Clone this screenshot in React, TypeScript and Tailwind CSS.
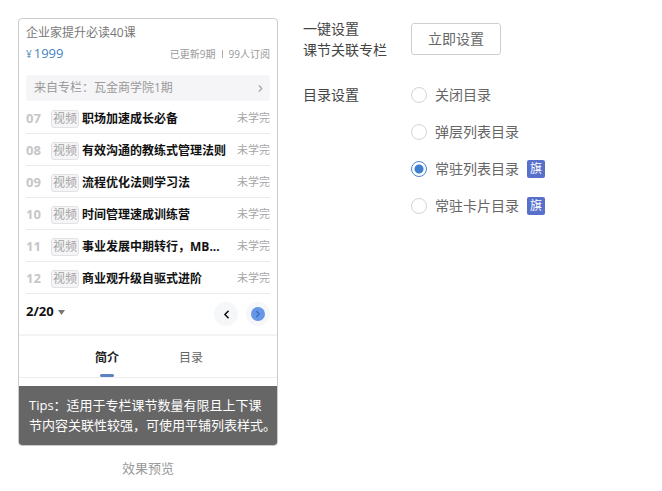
import { useState } from "react";
import { ChevronLeft, ChevronRight } from "lucide-react";

interface Lesson {
  no: string;
  title: string;
}

interface CatalogOption {
  value: string;
  label: string;
  flagship?: boolean;
}

const LESSONS: Lesson[] = [
  { no: "07", title: "职场加速成长必备" },
  { no: "08", title: "有效沟通的教练式管理法则" },
  { no: "09", title: "流程优化法则学习法" },
  { no: "10", title: "时间管理速成训练营" },
  { no: "11", title: "事业发展中期转行，MB..." },
  { no: "12", title: "商业观升级自驱式进阶" },
];

const CATALOG_OPTIONS: CatalogOption[] = [
  { value: "off", label: "关闭目录" },
  { value: "popup", label: "弹层列表目录" },
  { value: "list", label: "常驻列表目录", flagship: true },
  { value: "card", label: "常驻卡片目录", flagship: true },
];

export default function App() {
  const [catalog, setCatalog] = useState("list");

  return (
    <main className="flex items-start gap-[25px] bg-white p-[18px] font-['Open_Sans','Noto_Sans_CJK_SC',sans-serif] text-[#444]">
      <figure className="w-1/2 max-w-[260px]">
        <PreviewCard />
        <figcaption className="mt-3 text-center text-[13px] leading-[20px] text-[#999]">效果预览</figcaption>
      </figure>

      <div className="flex-1 text-sm leading-[21px]">
        <div className="flex items-start">
          <div className="w-[108px] shrink-0">
            <p>一键设置</p>
            <p>课节关联专栏</p>
          </div>
          <button
            type="button"
            className="mt-[5px] rounded-[3px] border border-[#cfcfcf] bg-white px-4 py-[5px] leading-[20px] text-[#666]"
          >
            立即设置
          </button>
        </div>

        <fieldset className="mt-6 flex items-start">
          <legend className="float-left w-[108px] shrink-0">目录设置</legend>
          <div className="flex flex-col gap-4">
            {CATALOG_OPTIONS.map((option) => (
              <CatalogRadio
                key={option.value}
                option={option}
                checked={catalog === option.value}
                onSelect={() => setCatalog(option.value)}
              />
            ))}
          </div>
        </fieldset>
      </div>
    </main>
  );
}

function PreviewCard() {
  return (
    <section className="overflow-hidden rounded-[4px] border border-[#cbcbcb] bg-white">
      <div className="px-[7px] pt-1">
        <h2 className="text-xs leading-[20px] text-[#777]">企业家提升必读40课</h2>
        <div className="mt-px flex items-center justify-between leading-[18px]">
          <span className="text-[13px] text-[#4585bd]">
            <span className="mr-[2px] text-[10px]">¥</span>1999
          </span>
          <span className="flex items-center gap-[6px] text-[10px] text-[#999]">
            <span>已更新9期</span>
            <span className="h-2 w-px bg-[#aaa]" />
            <span>99人订阅</span>
          </span>
        </div>

        <a
          href="#column"
          className="mt-3 flex h-[26px] items-center justify-between rounded-[3px] bg-[#f5f5f7] pr-1 pl-2 text-xs text-[#999]"
        >
          来自专栏：瓦金商学院1期
          <ChevronRight size={11} strokeWidth={2.5} className="text-[#a3a3a3]" />
        </a>

        <ul className="mt-px">
          {LESSONS.map((lesson) => (
            <li key={lesson.no} className="flex h-8 items-center border-b border-[#ebebeb] pt-[2px]">
              <span className="w-[25px] shrink-0 text-[13px] font-bold text-[#c6c6c6]">{lesson.no}</span>
              <span className="mr-[3px] h-[18px] shrink-0 rounded-[3px] border border-[#e2e2e6] bg-[#f5f5f7] px-px text-xs leading-[16px] text-[#a3a3a3]">
                视频
              </span>
              <span className="min-w-0 flex-1 truncate text-xs font-bold text-[#111]">{lesson.title}</span>
              <span className="shrink-0 text-[11px] text-[#a6a6a6]">未学完</span>
            </li>
          ))}
        </ul>

        <div className="flex h-[40px] items-center justify-between">
          <button type="button" className="mb-1 flex items-center gap-1 text-[13px] font-bold text-[#111]">
            2/20
            <svg width="7" height="5" viewBox="0 0 7 5" className="fill-[#777]">
              <path d="M0 0h7L3.5 5z" />
            </svg>
          </button>
          <div className="flex gap-2">
            <button
              type="button"
              aria-label="上一页"
              className="flex size-6 items-center justify-center rounded-full bg-[#f6f7f9] text-[#111]"
            >
              <ChevronLeft size={13} strokeWidth={3} />
            </button>
            <button
              type="button"
              aria-label="下一页"
              className="flex size-6 items-center justify-center rounded-full bg-[#f6f7f9]"
            >
              <span className="flex size-[14px] items-center justify-center rounded-full bg-[#6696e8] text-[#3a68bd]">
                <ChevronRight size={10} strokeWidth={3} />
              </span>
            </button>
          </div>
        </div>
      </div>

      <div className="flex h-[44px] justify-center gap-[60px] border-t-2 border-b border-t-[#f3f3f3] border-b-[#ededed] pl-[2px] text-xs">
        <button type="button" className="flex flex-col items-center justify-end font-bold text-[#222]">
          <span className="mb-[7px] leading-[18px]">简介</span>
          <span className="h-[3px] w-[14px] rounded-sm bg-[#5e83c4]" />
        </button>
        <button type="button" className="flex flex-col items-center justify-end text-[#666]">
          <span className="mb-[10px] leading-[18px]">目录</span>
        </button>
      </div>

      <p className="mt-2 bg-[#666] pt-[9px] pb-[10px] pl-[10px] text-[13px] leading-[20px] whitespace-nowrap text-white">
        Tips：适用于专栏课节数量有限且上下课
        <br />
        节内容关联性较强，可使用平铺列表样式。
      </p>
    </section>
  );
}

function CatalogRadio({
  option,
  checked,
  onSelect,
}: {
  option: CatalogOption;
  checked: boolean;
  onSelect: () => void;
}) {
  return (
    <label className="flex cursor-pointer items-center gap-2 text-[#666]">
      <input
        type="radio"
        name="catalog"
        value={option.value}
        checked={checked}
        onChange={onSelect}
        className="size-4 appearance-none rounded-full border border-[#d4d4d4] bg-white checked:border-[#4a86d0] checked:bg-[radial-gradient(circle,#3f7fd0_4px,#fff_5px)]"
      />
      {option.label}
      {option.flagship && (
        <span className="size-[18px] rounded-[2px] bg-[#5870ca] text-center text-xs leading-[18px] text-white">旗</span>
      )}
    </label>
  );
}
